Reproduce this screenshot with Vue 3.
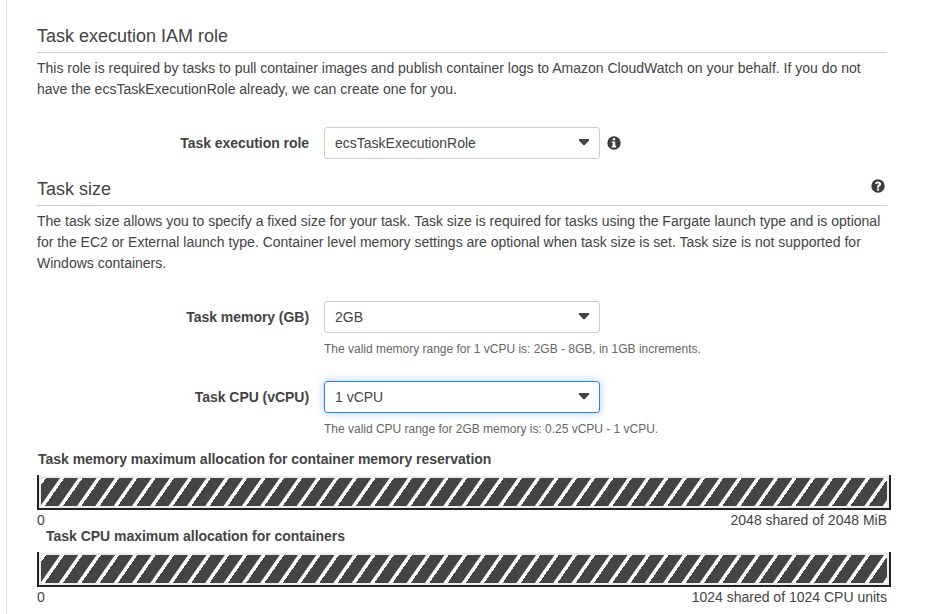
<script setup>
const bars = [
  { title: 'Task memory maximum allocation for container memory reservation', total: '2048 shared of 2048 MiB', indent: false },
  { title: 'Task CPU maximum allocation for containers', total: '1024 shared of 1024 CPU units', indent: true },
]
</script>

<template>
  <main class="panel">
    <section>
      <header class="heading first"><h2>Task execution IAM role</h2></header>
      <p class="copy">This role is required by tasks to pull container images and publish container logs to Amazon CloudWatch on your behalf. If you do not<br>have the ecsTaskExecutionRole already, we can create one for you.</p>
      <div class="field role">
        <label>Task execution role</label>
        <div class="select"><span>ecsTaskExecutionRole</span><svg class="caret" viewBox="0 0 10 7"><path d="M0 0h10v1.4L5.8 5.9Q5 6.7 4.2 5.9L0 1.4z" /></svg></div>
        <svg class="icon" viewBox="0 0 14 14">
          <circle cx="7" cy="7" r="6.7" />
          <path class="cut" d="M5.7 2.3h2.5v1.9H5.7zM4.7 5.4h3.5v4.4h1v1.6H4.7V9.8h1V7h-1z" />
        </svg>
      </div>
    </section>

    <section>
      <header class="heading second">
        <h2>Task size</h2>
        <svg class="icon help" viewBox="0 0 14 14">
          <circle cx="7" cy="7" r="6.7" />
          <path class="cut" d="M5.9 9.6h2.2v2H5.9zM3.9 4.6C4.5 3.2 5.6 2.4 7.1 2.4c1.7 0 3 1.1 3 2.6 0 1.2-.7 1.8-1.3 2.2-.6.3-.7.6-.7 1.5H5.9c0-1.6.2-2.1 1.1-2.7.6-.3.8-.6.8-.9 0-.5-.4-.8-.9-.8-.6 0-.9.4-1.4 1z" />
        </svg>
      </header>
      <p class="copy">The task size allows you to specify a fixed size for your task. Task size is required for tasks using the Fargate launch type and is optional<br>for the EC2 or External launch type. Container level memory settings are optional when task size is set. Task size is not supported for<br>Windows containers.</p>
      <div class="field memory">
        <label>Task memory (GB)</label>
        <div class="select"><span>2GB</span><svg class="caret" viewBox="0 0 10 7"><path d="M0 0h10v1.4L5.8 5.9Q5 6.7 4.2 5.9L0 1.4z" /></svg></div>
      </div>
      <p class="hint">The valid memory range for 1 vCPU is: 2GB - 8GB, in 1GB increments.</p>
      <div class="field cpu">
        <label>Task CPU (vCPU)</label>
        <div class="select focused"><span>1 vCPU</span><svg class="caret" viewBox="0 0 10 7"><path d="M0 0h10v1.4L5.8 5.9Q5 6.7 4.2 5.9L0 1.4z" /></svg></div>
      </div>
      <p class="hint">The valid CPU range for 2GB memory is: 0.25 vCPU - 1 vCPU.</p>
    </section>

    <section class="bars">
      <div v-for="bar in bars" :key="bar.title" class="allocation">
        <h3 :class="{ indent: bar.indent }">{{ bar.title }}</h3>
        <div class="track"><div class="groove"><div class="fill"></div></div></div>
        <div class="scale"><span>0</span><span>{{ bar.total }}</span></div>
      </div>
    </section>
  </main>
</template>

<style>
body { margin: 0; background: #fff; overflow: hidden; }
</style>

<style scoped>
.panel {
  box-sizing: border-box;
  height: 614px;
  margin-left: 6px;
  padding: 0 53px 0 30px;
  border-left: 1px solid #ddd;
  overflow: hidden;
  font: 14px/21px "Liberation Sans", Arial, sans-serif;
  color: #444;
}
h2, h3, p { margin: 0; }
.heading {
  display: flex;
  justify-content: space-between;
  box-sizing: border-box;
  width: 850px;
  border-bottom: 1px solid #ccc;
}
.heading h2 { font-size: 18px; line-height: 22px; font-weight: 400; }
.first { height: 53px; padding-top: 25px; }
.second { height: 30px; margin-top: 17px; padding-top: 2px; }
.help { margin: 1px 2px 0 0; }
.copy { padding-top: 5px; white-space: nowrap; }
.field { display: flex; align-items: center; height: 32px; }
.role { margin-top: 27px; }
.memory { margin-top: 27px; }
.cpu { margin-top: 21px; }
label { width: 272px; margin-right: 15px; text-align: right; font-weight: 700; letter-spacing: -0.05px; }
.select {
  display: flex;
  align-items: center;
  justify-content: space-between;
  box-sizing: border-box;
  width: 276px;
  height: 32px;
  padding: 0 10px;
  border: 1px solid #ccc;
  border-radius: 3px;
}
.focused { border-color: #2e83e0; box-shadow: 0 0 8px rgba(46, 131, 224, 0.4); }
.caret { width: 10px; height: 7px; margin-top: -1px; fill: #444; }
.icon { width: 14px; height: 14px; fill: #3c3c3c; }
.field .icon { margin-left: 7px; }
.icon .cut { fill: #fff; }
.hint { margin-left: 287px; padding: 6px 0 1px; font-size: 12px; line-height: 20px; letter-spacing: -0.01px; color: #666; }
.bars { padding-top: 9px; }
.allocation { height: 77px; }
h3 { margin-left: 1px; font-size: 14px; line-height: 21px; font-weight: 700; letter-spacing: -0.025px; }
h3.indent { margin-left: 9px; }
.track {
  box-sizing: border-box;
  width: 854px;
  height: 35px;
  margin-top: 5px;
  padding-top: 1px;
  border: solid #222;
  border-width: 0 2px 2px;
}
.groove { height: 28px; border: 2px solid #e9eeed; }
.fill {
  height: 28px;
  background: repeating-linear-gradient(-55deg, #fff, #fff 3px, #444 4px, #444 15px);
}
.scale { display: flex; justify-content: space-between; width: 850px; line-height: 20px; }
</style>
